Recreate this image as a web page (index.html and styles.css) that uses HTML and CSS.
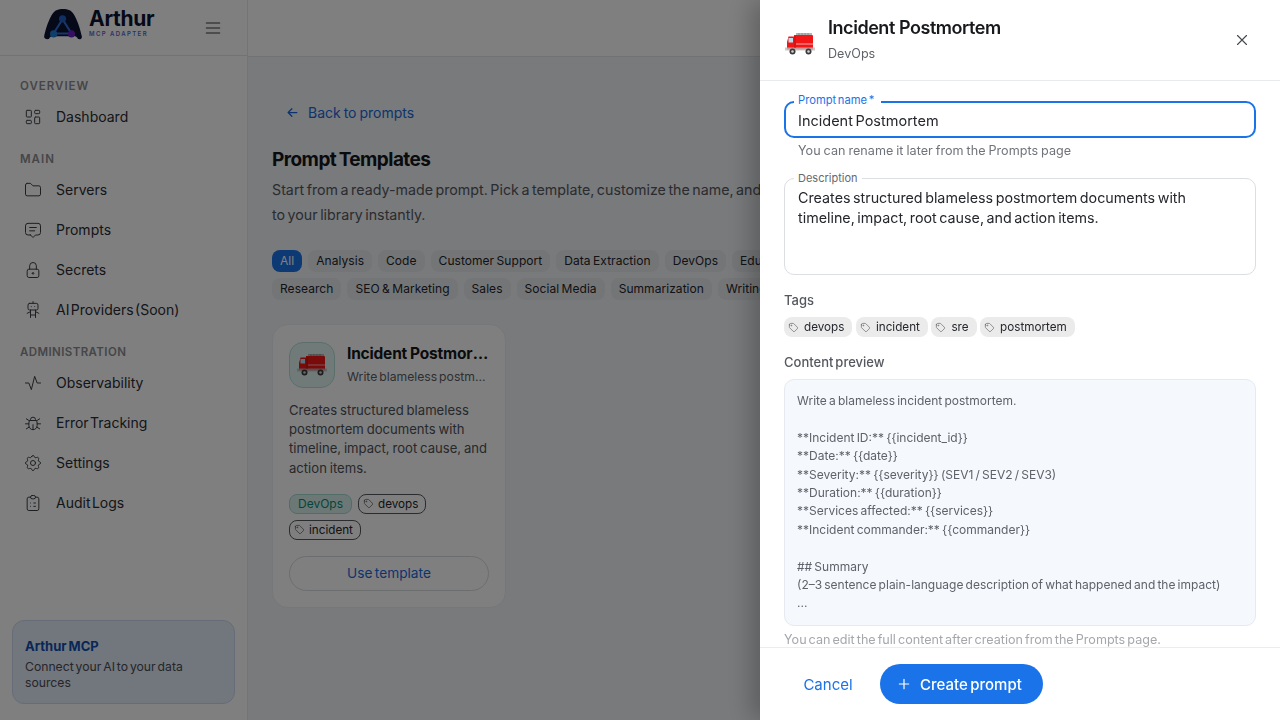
FILE: index.html
```html
<!DOCTYPE html>
<html lang="en">
<head>
<meta charset="utf-8">
<title>Prompt Templates</title>
<link rel="stylesheet" href="styles.css">
</head>
<body>
<svg class="defs" aria-hidden="true">
  <symbol id="i-dash" viewBox="0 0 24 24"><path d="M5 4h4a1 1 0 0 1 1 1v6a1 1 0 0 1-1 1H5a1 1 0 0 1-1-1V5a1 1 0 0 1 1-1M5 16h4a1 1 0 0 1 1 1v2a1 1 0 0 1-1 1H5a1 1 0 0 1-1-1v-2a1 1 0 0 1 1-1M15 12h4a1 1 0 0 1 1 1v6a1 1 0 0 1-1 1h-4a1 1 0 0 1-1-1v-6a1 1 0 0 1 1-1M15 4h4a1 1 0 0 1 1 1v2a1 1 0 0 1-1 1h-4a1 1 0 0 1-1-1V5a1 1 0 0 1 1-1"/></symbol>
  <symbol id="i-folder" viewBox="0 0 24 24"><path d="M5 4h4l3 3h7a2 2 0 0 1 2 2v8a2 2 0 0 1-2 2H5a2 2 0 0 1-2-2V6a2 2 0 0 1 2-2"/></symbol>
  <symbol id="i-msg" viewBox="0 0 24 24"><path d="M8 9h8M8 13h6M9 18H6a3 3 0 0 1-3-3V7a3 3 0 0 1 3-3h12a3 3 0 0 1 3 3v8a3 3 0 0 1-3 3h-3l-3 3-3-3z"/></symbol>
  <symbol id="i-lock" viewBox="0 0 24 24"><path d="M5 13a2 2 0 0 1 2-2h10a2 2 0 0 1 2 2v6a2 2 0 0 1-2 2H7a2 2 0 0 1-2-2zM11 16a1 1 0 1 0 2 0a1 1 0 0 0-2 0M8 11V7a4 4 0 1 1 8 0v4"/></symbol>
  <symbol id="i-robot" viewBox="0 0 24 24"><path d="M8 4h8a2 2 0 0 1 2 2v4a2 2 0 0 1-2 2H8a2 2 0 0 1-2-2V6a2 2 0 0 1 2-2zM12 2v2M9 12v9M15 12v9M5 16l4-2M15 14l4 2M9 18h6M10 8v.01M14 8v.01"/></symbol>
  <symbol id="i-pulse" viewBox="0 0 24 24"><path d="M3 12h4l3 8 4-16 3 8h4"/></symbol>
  <symbol id="i-bug" viewBox="0 0 24 24"><path d="M9 9V8a3 3 0 0 1 6 0v1M8 9h8a6 6 0 0 1 1 3v3a5 5 0 0 1-10 0v-3a6 6 0 0 1 1-3M3 13h4M17 13h4M12 20v-6M4 19l3.35-2M20 19l-3.35-2M4 7l3.75 2.4M20 7l-3.75 2.4"/></symbol>
  <symbol id="i-gear" viewBox="0 0 24 24"><path d="M10.325 4.317c.426-1.756 2.924-1.756 3.35 0a1.724 1.724 0 0 0 2.573 1.066c1.543-.94 3.31.826 2.37 2.37a1.724 1.724 0 0 0 1.065 2.572c1.756.426 1.756 2.924 0 3.35a1.724 1.724 0 0 0-1.066 2.573c.94 1.543-.826 3.31-2.37 2.37a1.724 1.724 0 0 0-2.572 1.065c-.426 1.756-2.924 1.756-3.35 0a1.724 1.724 0 0 0-2.573-1.066c-1.543.94-3.31-.826-2.37-2.37a1.724 1.724 0 0 0-1.065-2.572c-1.756-.426-1.756-2.924 0-3.35a1.724 1.724 0 0 0 1.066-2.573c-.94-1.543.826-3.31 2.37-2.37c1 .608 2.296.07 2.572-1.065z"/><circle cx="12" cy="12" r="3"/></symbol>
  <symbol id="i-clip" viewBox="0 0 24 24"><path d="M9 5H7a2 2 0 0 0-2 2v12a2 2 0 0 0 2 2h10a2 2 0 0 0 2-2V7a2 2 0 0 0-2-2h-2M11 3h2a2 2 0 0 1 2 2a2 2 0 0 1-2 2h-2a2 2 0 0 1-2-2a2 2 0 0 1 2-2zM9 12h.01M13 12h2M9 16h.01M13 16h2"/></symbol>
  <symbol id="i-tag" viewBox="0 0 24 24"><path d="M6.500 7.500a1 1 0 1 0 2 0a1 1 0 1 0-2 0M3 6v5.172a2 2 0 0 0 .586 1.414l7.71 7.71a2.41 2.41 0 0 0 3.408 0l5.592-5.592a2.41 2.41 0 0 0 0-3.408l-7.71-7.71A2 2 0 0 0 11.172 3H6a3 3 0 0 0-3 3z"/></symbol>
  <symbol id="i-truck" viewBox="0 0 30 22">
    <rect x="11" y="0" width="16" height="3" fill="#b5b5b5"/>
    <path d="M14 0v3M17 0v3M20 0v3M23 0v3" stroke="#808080" stroke-width=".7"/>
    <path d="M2 9l1.500-5.500H9V2h18a1 1 0 0 1 1 1v13.500H2z" fill="#f21616"/>
    <rect x="0" y="14.500" width="30" height="3" fill="#bdbdbd" opacity=".8"/>
    <rect x="3.500" y="5" width="4.500" height="4.500" fill="#b9dff0"/>
    <path d="M10 3v12" stroke="#b01010" stroke-width=".8"/>
    <path d="M11 11h17" stroke="#ffd0d0" stroke-width=".8"/>
    <circle cx="7.500" cy="18.500" r="3" fill="#3a3a3a"/><circle cx="7.500" cy="18.500" r="1.300" fill="#d2d2d2"/>
    <circle cx="23.500" cy="18.500" r="3" fill="#3a3a3a"/><circle cx="23.500" cy="18.500" r="1.300" fill="#d2d2d2"/>
  </symbol>
</svg>

<div class="app">
  <aside class="sidebar">
    <div class="brand">
      <div class="logo">
        <svg class="logo-mark" viewBox="0 0 40 34">
          <path d="M0 30C2 21 7 5 13 2.500c4-2 10-2 14 0 6 2.500 11 18.500 13 27.500.5 3-2 3.500-4 3-1-2.500-4-4-5-3H10c-1-1-4 .5-5 3-2.500.5-5.500 0-5-3z" fill="#0d1230"/>
          <path d="M19.500 12L10 27h19z" fill="none" stroke="#2f6fd8" stroke-width="2.200"/>
          <circle cx="19.500" cy="11.500" r="3.800" fill="#2160c4"/>
          <circle cx="10" cy="27.500" r="3.800" fill="#1d7fd1"/>
          <circle cx="29" cy="27.500" r="3.800" fill="#6a1fc0"/>
        </svg>
        <div class="logo-text">
          <span class="logo-name">Arthur</span>
          <span class="logo-sub">MCP ADAPTER</span>
        </div>
      </div>
      <svg class="ico burger" viewBox="0 0 24 24"><path d="M4 6h16M4 12h16M4 18h16"/></svg>
    </div>
    <nav class="nav">
      <div class="nav-label">OVERVIEW</div>
      <a class="nav-item"><svg class="ico"><use href="#i-dash"/></svg>Dashboard</a>
      <div class="nav-label">MAIN</div>
      <a class="nav-item"><svg class="ico"><use href="#i-folder"/></svg>Servers</a>
      <a class="nav-item"><svg class="ico"><use href="#i-msg"/></svg>Prompts</a>
      <a class="nav-item"><svg class="ico"><use href="#i-lock"/></svg>Secrets</a>
      <a class="nav-item"><svg class="ico"><use href="#i-robot"/></svg>AI Providers (Soon)</a>
      <div class="nav-label tight">ADMINISTRATION</div>
      <a class="nav-item"><svg class="ico"><use href="#i-pulse"/></svg>Observability</a>
      <a class="nav-item"><svg class="ico"><use href="#i-bug"/></svg>Error Tracking</a>
      <a class="nav-item"><svg class="ico"><use href="#i-gear"/></svg>Settings</a>
      <a class="nav-item"><svg class="ico"><use href="#i-clip"/></svg>Audit Logs</a>
    </nav>
    <div class="promo">
      <div class="promo-title">Arthur MCP</div>
      <div class="promo-text">Connect your AI to your data sources</div>
    </div>
  </aside>

  <div class="main">
    <header class="topbar"></header>
    <main class="content">
      <a class="back"><svg class="ico back-ico" viewBox="0 0 24 24"><path d="M5 12h14M5 12l6 6M5 12l6-6"/></svg>Back to prompts</a>
      <h1 class="page-title">Prompt Templates</h1>
      <p class="page-desc">Start from a ready-made prompt. Pick a template, customize the name, and add it to your library instantly.</p>
      <div class="filters">
        <div class="filter-row"><span class="filter on">All</span><span class="filter">Analysis</span><span class="filter">Code</span><span class="filter">Customer Support</span><span class="filter">Data Extraction</span><span class="filter">DevOps</span><span class="filter">Education</span><span class="filter">Finance</span><span class="filter">Legal</span></div>
        <div class="filter-row"><span class="filter">Research</span><span class="filter">SEO &amp; Marketing</span><span class="filter">Sales</span><span class="filter">Social Media</span><span class="filter">Summarization</span><span class="filter">Writing</span></div>
      </div>
      <article class="card">
        <div class="card-head">
          <div class="card-icon"><svg class="truck-sm"><use href="#i-truck"/></svg></div>
          <div class="card-titles">
            <div class="card-title">Incident Postmortem</div>
            <div class="card-sub">Write blameless postmortems</div>
          </div>
        </div>
        <p class="card-desc">Creates structured blameless postmortem documents with timeline, impact, root cause, and action items.</p>
        <div class="card-tags">
          <span class="cat">DevOps</span>
          <span class="otag"><svg class="ico tag-ico"><use href="#i-tag"/></svg>devops</span>
          <span class="otag"><svg class="ico tag-ico"><use href="#i-tag"/></svg>incident</span>
        </div>
        <button class="use-btn">Use template</button>
      </article>
    </main>
  </div>
</div>

<div class="overlay"></div>

<aside class="drawer">
  <header class="d-head">
    <svg class="truck-lg"><use href="#i-truck"/></svg>
    <div class="d-titles">
      <div class="d-title">Incident Postmortem</div>
      <div class="d-sub">DevOps</div>
    </div>
    <svg class="ico close" viewBox="0 0 24 24"><path d="M6 6l12 12M18 6L6 18"/></svg>
  </header>
  <div class="d-body">
    <div class="field">
      <span class="float blue">Prompt name *</span>
      <input class="input" value="Incident Postmortem">
    </div>
    <div class="help">You can rename it later from the Prompts page</div>
    <div class="field desc-field">
      <span class="float">Description</span>
      <textarea class="area">Creates structured blameless postmortem documents with timeline, impact, root cause, and action items.</textarea>
    </div>
    <div class="sec-label tags-label">Tags</div>
    <div class="tags">
      <span class="tag"><svg class="ico tag-ico"><use href="#i-tag"/></svg>devops</span>
      <span class="tag"><svg class="ico tag-ico"><use href="#i-tag"/></svg>incident</span>
      <span class="tag"><svg class="ico tag-ico"><use href="#i-tag"/></svg>sre</span>
      <span class="tag"><svg class="ico tag-ico"><use href="#i-tag"/></svg>postmortem</span>
    </div>
    <div class="sec-label preview-label">Content preview</div>
    <pre class="preview">Write a blameless incident postmortem.

**Incident ID:** {{incident_id}}
**Date:** {{date}}
**Severity:** {{severity}} (SEV1 / SEV2 / SEV3)
**Duration:** {{duration}}
**Services affected:** {{services}}
**Incident commander:** {{commander}}

## Summary
(2–3 sentence plain-language description of what happened and the impact)
...</pre>
    <div class="note">You can edit the full content after creation from the Prompts page.</div>
  </div>
  <footer class="d-foot">
    <button class="cancel">Cancel</button>
    <button class="create"><svg class="ico plus" viewBox="0 0 24 24"><path d="M12 5v14M5 12h14"/></svg>Create prompt</button>
  </footer>
</aside>
</body>
</html>
```
FILE: styles.css
```css
* { box-sizing: border-box; }
html, body { margin: 0; height: 100%; }
body {
  width: 1280px; height: 720px; overflow: hidden;
  font-family: "Inter", "Noto Sans", sans-serif;
  word-spacing: -1.5px;
  color: #1b1d22; background: #f1f4f8;
}
.defs { display: none; }
.ico { width: 20px; height: 20px; fill: none; stroke: currentColor; stroke-width: 1.5; stroke-linecap: round; stroke-linejoin: round; flex: none; }

.app { display: flex; height: 720px; }
.sidebar { width: 248px; flex: none; background: #fff; border-right: 1px solid #e6e8eb; display: flex; flex-direction: column; }
.brand { height: 56px; flex: none; display: flex; align-items: flex-start; border-bottom: 1px solid #e4e6e9; padding: 8px 24px 0 44px; }
.logo { display: flex; gap: 7px; }
.logo-mark { width: 38px; height: 32px; display: block; }
.logo-text { display: flex; flex-direction: column; }
.logo-name { font-size: 21px; line-height: 22px; font-weight: 700; color: #0d1230; letter-spacing: -.3px; }
.logo-sub { font-size: 6px; line-height: 8px; font-weight: 600; letter-spacing: 1.4px; color: #4f6bd0; word-spacing: 0; }
.burger { width: 20px; height: 20px; margin-left: auto; margin-top: 10px; color: #33363c; stroke-width: 1.4; }

.nav { padding-top: 8px; flex: 1; }
.nav-label { font-size: 11.500px; line-height: 18px; font-weight: 600; letter-spacing: 1px; color: #8b8d92; padding-left: 20px; margin-top: 13px; margin-bottom: 2px; word-spacing: 0; }
.nav-label.tight { letter-spacing: .4px; }
.nav-item { height: 40px; display: flex; align-items: center; gap: 13px; padding: 0 0 2px 23px; font-size: 14px; color: #2a2c33; word-spacing: -2.500px; }
.nav-item .ico { stroke-width: 1.2; color: #3c3f45; margin-top: 2px; }

.promo { margin: 0 12px 16px; height: 84px; padding: 16px 12px; background: #e4ecfb; border: 1px solid #cdd9f1; border-radius: 12px; }
.promo-title { font-size: 13px; line-height: 18px; font-weight: 700; color: #0f4fb0; word-spacing: -1px; }
.promo-text { font-size: 12.200px; line-height: 16px; color: #4a4c53; margin-top: 4px; }

.main { flex: 1; min-width: 0; display: flex; flex-direction: column; }
.topbar { height: 57px; flex: none; background: #fff; border-bottom: 1px solid #e4e6e9; }
.content { flex: 1; padding: 42px 24px 0; }

.back { display: flex; align-items: center; gap: 8px; height: 26px; padding-left: 13px; font-size: 14px; color: #1a68d8; word-spacing: -1px; }
.back-ico { width: 15px; height: 15px; stroke-width: 2; }
.page-title { margin: 21px 0 0; font-size: 19px; line-height: 28px; font-weight: 700; color: #15171b; letter-spacing: -.55px; }
.page-desc { margin: 3px 0 0; width: 535px; font-size: 14.250px; line-height: 25px; color: #55585f; }
.filters { display: flex; flex-direction: column; gap: 6px; margin-top: 23px; }
.filter-row { display: flex; gap: 6px; white-space: nowrap; }
.filter { height: 22px; padding: 0 8px; border-radius: 8px; background: #e9ebee; font-size: 12px; line-height: 22px; color: #23252b; letter-spacing: .05px; word-spacing: -1px; }
.filter.on { background: #1a73e8; color: #fff; }

.card { width: 234px; height: 284px; margin-top: 24px; padding: 17px 16px 0; background: #fff; border: 1px solid #eceef1; border-radius: 16px; display: flex; flex-direction: column; }
.card-head { display: flex; gap: 12px; }
.card-icon { width: 46px; height: 46px; flex: none; border-radius: 14px; background: #e0f4f1; border: 1px solid #b5dfd8; display: flex; align-items: center; justify-content: center; }
.truck-sm { width: 30px; height: 22px; display: block; }
.card-titles { min-width: 0; flex: 1; padding-top: 1px; }
.card-title { font-size: 15.500px; line-height: 22px; font-weight: 700; color: #15171b; white-space: nowrap; overflow: hidden; text-overflow: ellipsis; letter-spacing: -.2px; word-spacing: -.5px; }
.card-sub { font-size: 12.200px; line-height: 18px; color: #5b5e65; white-space: nowrap; overflow: hidden; text-overflow: ellipsis; margin-top: 3px; }
.card-desc { margin: 13px 0 0; font-size: 13.100px; line-height: 19.200px; color: #4e5158; word-spacing: -.8px; }
.card-tags { display: flex; flex-wrap: wrap; gap: 6px; margin-top: 16px; }
.cat { height: 20px; padding: 0 8px; border-radius: 8px; background: #d9f1ed; border: 1px solid #a5d8cf; color: #0b8a72; font-size: 12px; line-height: 18px; }
.otag { height: 20px; padding: 0 7px 0 4px; display: flex; align-items: center; gap: 4px; border-radius: 8px; border: 1px solid #55585f; font-size: 11.700px; color: #23252b; }
.tag-ico { width: 11px; height: 11px; color: #55585f; stroke-width: 1.6; }
.use-btn { margin-top: 16px; height: 35px; width: 200px; border-radius: 18px; border: 1px solid #d9dbdf; background: transparent; color: #1a68d8; font: inherit; font-size: 13.700px; word-spacing: -1.5px; }

.overlay { position: fixed; inset: 0; background: rgba(0,0,0,.5); }

.drawer { position: fixed; top: 0; right: 0; width: 520px; height: 720px; background: #fff; display: flex; flex-direction: column; box-shadow: -8px 0 24px rgba(0,0,0,.25); }
.d-head { height: 81px; flex: none; border-bottom: 1px solid #e8eaee; display: flex; padding: 0 29px 0 25px; }
.truck-lg { width: 30px; height: 22px; margin-top: 33px; flex: none; }
.d-titles { margin-left: 13px; padding-top: 15px; }
.d-title { font-size: 18px; line-height: 25px; font-weight: 600; color: #17191d; letter-spacing: -.45px; word-spacing: 0; }
.d-sub { font-size: 12.600px; line-height: 18px; color: #5f6269; margin-top: 5px; }
.close { margin-left: auto; margin-top: 31px; width: 18px; height: 18px; color: #44474d; }

.d-body { flex: 1; min-height: 0; overflow: hidden; padding: 20px 24px 0; }
.field { position: relative; }
.float { position: absolute; left: 10px; top: -7px; padding: 0 4px; background: #fff; font-size: 11px; line-height: 14px; color: #66696f; z-index: 1; }
.float.blue { color: #1a73e8; padding: 0 7px 0 4px; top: -8px; font-size: 11.200px; }
.input { display: block; width: 472px; height: 37px; border: 2px solid #1a73e8; border-radius: 10px; padding: 2px 12px 0; font: inherit; font-size: 14.500px; color: #25272d; outline: none; background: #fff; word-spacing: -1.5px; }
.help { padding-left: 14px; font-size: 12.600px; line-height: 18px; color: #70737a; margin-top: 4px; word-spacing: -.5px; }
.desc-field { margin-top: 18px; }
.area { display: block; width: 472px; height: 97px; border: 1px solid #dcdee2; border-radius: 10px; padding: 9px 13px; font: inherit; font-size: 14.300px; line-height: 20px; color: #25272d; resize: none; overflow: hidden; outline: none; word-spacing: -1.5px; }
.sec-label { font-size: 13px; line-height: 18px; font-weight: 500; color: #55585f; }
.tags-label { margin-top: 16px; }
.tags { display: flex; gap: 3.500px; margin-top: 8px; }
.tag { height: 20px; padding: 0 8px 0 4px; display: flex; align-items: center; gap: 5px; border-radius: 8px; background: #ebebeb; font-size: 11.700px; color: #25272d; word-spacing: 0; }
.tag .tag-ico { color: #6b6d72; }
.preview-label { margin-top: 16px; }
.preview { margin: 8px 0 0; height: 247px; padding: 12px; background: #f5f8fd; border: 1px solid #e6eaf0; border-radius: 10px; font-family: inherit; font-size: 12px; line-height: 18.400px; color: #5f6269; white-space: pre-wrap; overflow: hidden; word-spacing: -1.2px; }
.note { font-size: 12.600px; line-height: 18px; color: #a5a7ab; margin-top: 5px; }

.d-foot { height: 73px; flex: none; border-top: 1px solid #ebedf0; display: flex; align-items: center; gap: 8px; padding: 0 24px; }
.cancel { height: 40px; width: 88px; border: 0; background: none; color: #1a73e8; font: inherit; font-size: 15px; }
.create { height: 40px; width: 163px; display: flex; align-items: center; gap: 8px; padding: 0 0 0 16px; border: 0; border-radius: 20px; background: #1a73e8; color: #fff; font: inherit; font-size: 15px; font-weight: 500; word-spacing: -1.5px; }
.plus { width: 16px; height: 16px; stroke-width: 1.8; }
```
